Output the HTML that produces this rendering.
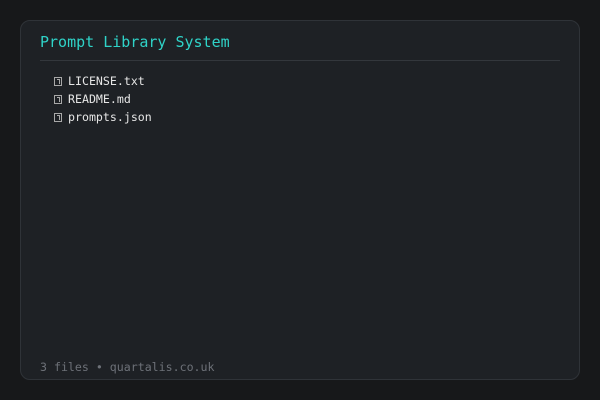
<!DOCTYPE html>
<html><head><style>
html,body{margin:0;padding:0;background:#17181a;width:600px;height:400px;overflow:hidden}
.card{position:absolute;left:20px;top:20px;width:558px;height:358px;background:#1e2125;border:1px solid #2f3338;border-radius:10px}
.t{position:absolute;left:19px;top:12px;font:15px "DejaVu Sans Mono","Liberation Mono",monospace;color:#2fd3c8}
.hr{position:absolute;left:19px;top:39px;width:520px;height:1px;background:#33373c}
.f{position:absolute;left:47px;font:11.6px "DejaVu Sans Mono","Liberation Mono",monospace;color:#e6e6e6;line-height:18px}
.i{position:absolute;left:-14px;top:5px;width:6px;height:7px;border:1px solid #a8a8a8}
.i:after{content:"";position:absolute;left:2px;top:1px;width:2px;height:4px;border-right:1px solid #a8a8a8;border-top:1px solid #a8a8a8}
.ft{position:absolute;left:19px;top:339px;font:11.6px "DejaVu Sans Mono","Liberation Mono",monospace;color:#6d7178}
</style></head><body>
<div class="card">
<div class="t">Prompt Library System</div>
<div class="hr"></div>
<div class="f" style="top:51px"><span class="i"></span>LICENSE.txt</div>
<div class="f" style="top:69px"><span class="i"></span>README.md</div>
<div class="f" style="top:87px"><span class="i"></span>prompts.json</div>
<div class="ft">3 files • quartalis.co.uk</div>
</div>
</body></html>
